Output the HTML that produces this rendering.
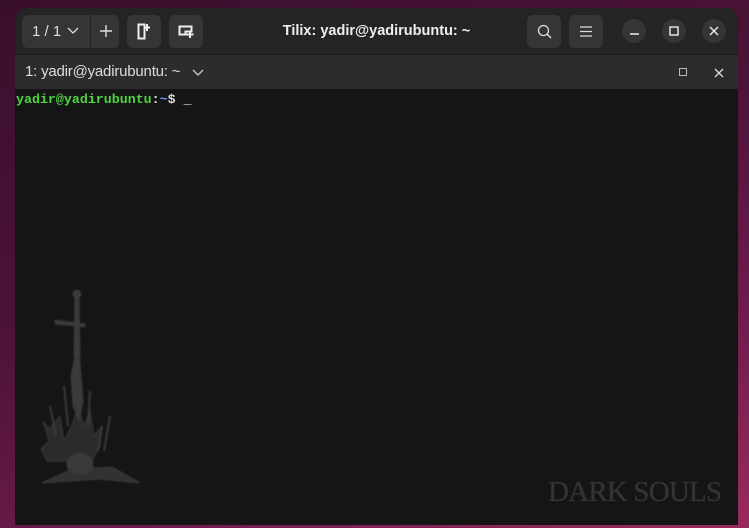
<!DOCTYPE html>
<html><head><style>
*{margin:0;padding:0;box-sizing:border-box}
body{width:749px;height:528px;overflow:hidden;position:relative;font-family:"Liberation Sans",sans-serif;
background:linear-gradient(160deg,#3a0f2c 0%,#4a1236 40%,#6a1a4a 70%,#9a2a5e 100%);}
.win{position:absolute;left:15px;top:8px;width:723px;height:517px;background:#151515;border-radius:12px 12px 0 0;overflow:hidden}
.hdr{position:absolute;left:0;top:0;width:100%;height:47px;background:#242424;border-bottom:1px solid #1a1a1a}
.btn{position:absolute;top:7px;height:33px;background:#353535;border-radius:6px;color:#ddd}
.title{position:absolute;left:0;width:723px;top:15px;text-align:center;color:#eee;font-weight:bold;font-size:14.5px}
.circ{position:absolute;top:11px;width:24px;height:24px;border-radius:50%;background:#353535}
.tab{position:absolute;left:0;top:47px;width:100%;height:34px;background:#2c2c2c;color:#ddd;font-size:15px}
.term{position:absolute;left:1px;top:84px;font-family:"Liberation Mono",monospace;font-weight:bold;font-size:13.3px;color:#4ed33f}
svg{position:absolute}
</style></head><body>
<div class="win">
 <div class="hdr">
  <div class="btn" style="left:7px;width:97px">
   <span style="position:absolute;left:10px;top:8px;font-size:15px">1 / 1</span>
   <svg style="left:45px;top:12px" width="12" height="8"><path d="M1 1l5 5 5-5" stroke="#ddd" fill="none" stroke-width="1.3"/></svg>
   <div style="position:absolute;left:68px;top:0;width:1px;height:33px;background:#222"></div>
   <svg style="left:77px;top:9px" width="14" height="14"><path d="M7 1v12M1 7h12" stroke="#ddd" stroke-width="1.4"/></svg>
  </div>
  <div class="btn" style="left:112px;width:34px">
   <svg style="left:10px;top:8px" width="14" height="17"><path d="M1.5 1.5h6v14h-6z" stroke="#eee" stroke-width="2" fill="none"/><path d="M10 1v7M7 4.5h6" stroke="#eee" stroke-width="2"/></svg>
  </div>
  <div class="btn" style="left:154px;width:34px">
   <svg style="left:9px;top:10px" width="17" height="14"><path d="M1.5 1.5h12v5h-6v3h-6z" stroke="#eee" stroke-width="2" fill="none"/><path d="M12 6v7M8.5 9.5h7" stroke="#eee" stroke-width="2"/></svg>
  </div>
  <div class="title">Tilix: yadir@yadirubuntu: ~</div>
  <div class="btn" style="left:512px;width:34px">
   <svg style="left:10px;top:9px" width="16" height="16"><circle cx="6.5" cy="6.5" r="5" stroke="#ddd" stroke-width="1.3" fill="none"/><path d="M10 10l4 4" stroke="#ddd" stroke-width="1.4"/></svg>
  </div>
  <div class="btn" style="left:554px;width:34px">
   <svg style="left:11px;top:11px" width="12" height="11"><path d="M0 1h12M0 5.5h12M0 10h12" stroke="#ddd" stroke-width="1.2"/></svg>
  </div>
  <div class="circ" style="left:607px"><svg style="left:8px;top:14px" width="9" height="2"><path d="M0 1h9" stroke="#eee" stroke-width="1.4"/></svg></div>
  <div class="circ" style="left:647px"><svg style="left:7px;top:7px" width="10" height="10"><rect x="1" y="1" width="8" height="8" stroke="#eee" stroke-width="1.4" fill="none"/></svg></div>
  <div class="circ" style="left:687px"><svg style="left:7px;top:7px" width="10" height="10"><path d="M1 1l8 8M9 1l-8 8" stroke="#eee" stroke-width="1.4"/></svg></div>
 </div>
 <div class="tab">
  <span style="position:absolute;left:10px;top:8px;letter-spacing:-0.2px">1: yadir@yadirubuntu: ~</span>
  <svg style="left:177px;top:14px" width="12" height="8"><path d="M1 1l5 5 5-5" stroke="#ccc" fill="none" stroke-width="1.3"/></svg>
  <svg style="left:664px;top:13px" width="9" height="9"><rect x="0.5" y="0.5" width="7" height="7" stroke="#bbb" fill="none"/></svg>
  <svg style="left:699px;top:13px" width="10" height="10"><path d="M1 1l8 8M9 1l-8 8" stroke="#ddd" stroke-width="1.3"/></svg>
 </div>
 <div class="term">yadir@yadirubuntu<span style="color:#ddd">:</span><span style="color:#6f8fe8">~</span><span style="color:#ddd">$ _</span></div>
 <svg style="left:25px;top:278px;filter:blur(0.8px)" width="105" height="200" viewBox="0 0 105 200">
  <g fill="#3a3a3a" stroke="#3a3a3a" stroke-width="1">
   <circle cx="37" cy="8" r="4"/>
   <path d="M35 10h4l1 60h-6z"/>
   <path d="M15 34l30 4 0 3-30-3z"/>
   <path d="M36 65l3 0 4 50 -4 20 -6 -15 -2 -30z"/>
   <path d="M20 130l4 25 8-15 6 -20 6 20 6 -15 4 25 8-10 -2 20 -8 15h-45l-6 -12 8 -8 -6 -20 6 8z" fill-opacity="0.6"/>
   <path d="M10 120l6 30M62 140l-4 25M70 130l-6 35M24 100l4 40M50 105l-2 35" stroke-width="2" fill="none"/>
   <ellipse cx="40" cy="178" rx="13" ry="11"/>
   <path d="M2 197l30-14 40 -2 28 16 -40 -4z" fill-opacity="0.8"/>
  </g>
 </svg>
 <div style="position:absolute;left:533px;top:468px;font-family:'Liberation Serif',serif;font-size:29px;color:#333;letter-spacing:-0.8px;text-shadow:0 0 1px #333">DARK SOULS</div>
</div>
</body></html>
